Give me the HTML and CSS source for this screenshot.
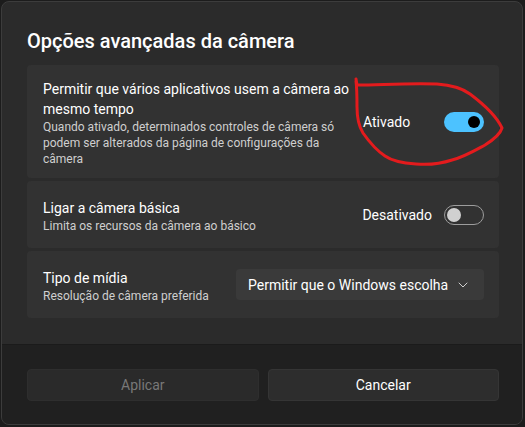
FILE: index.html
```html
<!DOCTYPE html>
<html lang="pt-BR">

<head>
    <meta charset="UTF-8">
    <title>Opções avançadas da câmera</title>
    <link rel="stylesheet" href="styles.css">
</head>

<body>
    <div class="dialog">
        <!-- conteúdo principal -->
        <div class="dialog-body">
            <h1 class="dialog-title">Opções avançadas da câmera</h1>

            <div class="card card-tall">
                <div class="card-text">
                    <div class="card-title">Permitir que vários aplicativos usem a câmera ao mesmo tempo</div>
                    <div class="card-desc">Quando ativado, determinados controles de câmera só podem ser alterados da página de configurações da câmera</div>
                </div>
                <div class="toggle-box">
                    <span class="toggle-label">Ativado</span>
                    <span class="toggle toggle-on"><span class="knob"></span></span>
                </div>
                <!-- marcação vermelha feita à mão por cima da captura -->
                <svg class="scribble" width="160" height="100" viewBox="350 78 160 100">
                    <path d="M356 80 L357 86 C380 86 405 84 437 85 C452 86 462 89 470 95 C482 104 496 116 502 129 C500 136 493 141 485 146 C474 152 464 158 452 161 C440 165 428 166 416 165 C402 164 392 162 385 157 C376 151 370 144 363 134 C358 126 357 118 357 108 C357 98 357 90 356 82"
                          fill="none" stroke="#e31b1d" stroke-width="3" stroke-linecap="round" stroke-linejoin="round" />
                </svg>
            </div>

            <div class="card">
                <div class="card-text">
                    <div class="card-title">Ligar a câmera básica</div>
                    <div class="card-desc">Limita os recursos da câmera ao básico</div>
                </div>
                <div class="toggle-box">
                    <span class="toggle-label">Desativado</span>
                    <span class="toggle toggle-off"><span class="knob"></span></span>
                </div>
            </div>

            <div class="card">
                <div class="card-text">
                    <div class="card-title">Tipo de mídia</div>
                    <div class="card-desc">Resolução de câmera preferida</div>
                </div>
                <div class="dropdown">
                    <span>Permitir que o Windows escolha</span>
                    <svg class="chevron" width="10" height="6" viewBox="0 0 10 6">
                        <path d="M1 1 L5 5 L9 1" fill="none" stroke="#cfcfcf" stroke-width="1" stroke-linecap="round" stroke-linejoin="round" />
                    </svg>
                </div>
            </div>
        </div>

        <!-- botões do rodapé -->
        <div class="dialog-footer">
            <button class="btn btn-disabled">Aplicar</button>
            <button class="btn">Cancelar</button>
        </div>
    </div>
</body>

</html>
```

FILE: styles.css
```css
body {
    font-family: Roboto, "Noto Sans", sans-serif;
    background-color: #1c1c1c;
    color: #fff;
    margin: 0;
    padding: 1px;
    width: 523px;
    height: 425px;
    box-sizing: border-box;
}

.dialog {
    height: 424px;
    width: 522px;
    background-color: #2b2b2b;
    border: 1px solid #3c3c3c;
    border-radius: 8px;
    box-sizing: border-box;
    overflow: hidden;
    display: flex;
    flex-direction: column;
}

.dialog-body {
    padding: 25px 23px 0 25px;
    height: 342px;
    box-sizing: border-box;
    display: flex;
    flex-direction: column;
    gap: 3px;
}

.dialog-title {
    font-size: 20px;
    font-weight: 500;
    line-height: 28px;
    margin: 0 0 7px 0;
}

.card {
    position: relative;
    background-color: #323232;
    border-radius: 4px;
    display: flex;
    align-items: center;
    gap: 8px;
    padding: 0 15px 0 16px;
    height: 67px;
    flex-shrink: 0;
}

.card-tall {
    height: 113px;
}

.card-text {
    flex: 1;
    min-width: 0;
    padding-top: 2px;
}

.card-title {
    font-size: 14px;
    line-height: 20px;
}

.card-desc {
    font-size: 12px;
    line-height: 16px;
    color: #cfcfcf;
    max-width: 300px;
}

.toggle-box {
    display: flex;
    align-items: center;
    gap: 12px;
    flex-shrink: 0;
}

.toggle-label {
    font-size: 14px;
    min-width: 69px;
}

.toggle {
    width: 40px;
    height: 20px;
    border-radius: 10px;
    box-sizing: border-box;
    display: flex;
    align-items: center;
}

.toggle-on {
    background-color: #4cc2ff;
    justify-content: flex-end;
    padding-right: 4px;
}

.toggle-on .knob {
    width: 12px;
    height: 12px;
    border-radius: 50%;
    background-color: #000;
}

.toggle-off {
    border: 1px solid #9d9d9d;
    padding-left: 2px;
}

.toggle-off .knob {
    width: 14px;
    height: 14px;
    border-radius: 50%;
    background-color: #d0d0d0;
}

.scribble {
    position: absolute;
    left: 323px;
    top: 12px;
}

.dropdown {
    width: 248px;
    height: 31px;
    box-sizing: border-box;
    background-color: #3a3a3a;
    border-radius: 4px;
    padding: 0 16px 0 12px;
    display: flex;
    align-items: center;
    justify-content: space-between;
    font-size: 14px;
    white-space: nowrap;
    flex-shrink: 0;
}

.dialog-footer {
    flex: 1;
    background-color: #202020;
    border-top: 1px solid #1b1b1b;
    display: flex;
    gap: 9px;
    padding: 24px 23px 0 25px;
}

.btn {
    flex: 1;
    height: 32px;
    background-color: #2d2d2d;
    color: #fff;
    border: 1px solid #353535;
    border-radius: 4px;
    font-family: inherit;
    font-size: 14px;
}

.btn-disabled {
    background-color: #2a2a2a;
    border-color: #2e2e2e;
    color: #787878;
}
```
